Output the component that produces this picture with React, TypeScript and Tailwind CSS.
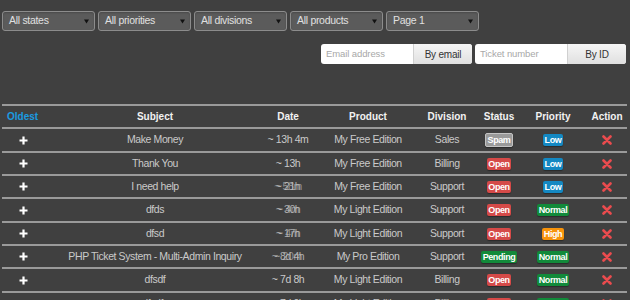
import React from "react";

type Row = {
  subject: string;
  date: string[];
  product: string;
  division: string;
  status: string;
  priority: string;
};

const rows: Row[] = [
  { subject: "Make Money", date: ["~ 13h 4m"], product: "My Free Edition", division: "Sales", status: "Spam", priority: "Low" },
  { subject: "Thank You", date: ["~ 13h"], product: "My Free Edition", division: "Billing", status: "Open", priority: "Low" },
  { subject: "I need help", date: ["~ 21h", "~ 58m"], product: "My Free Edition", division: "Support", status: "Open", priority: "Low" },
  { subject: "dfds", date: ["~ 30h", "~ 4m"], product: "My Light Edition", division: "Support", status: "Open", priority: "Normal" },
  { subject: "dfsd", date: ["~ 17h", "~ 4m"], product: "My Light Edition", division: "Support", status: "Open", priority: "High" },
  { subject: "PHP Ticket System - Multi-Admin Inquiry", date: ["~ 8d 4h", "~ 20m"], product: "My Pro Edition", division: "Support", status: "Pending", priority: "Normal" },
  { subject: "dfsdf", date: ["~ 7d 8h"], product: "My Light Edition", division: "Billing", status: "Open", priority: "Normal" },
  { subject: "dfsdfs", date: ["~ 7d 9h"], product: "My Light Edition", division: "Billing", status: "Open", priority: "Normal" },
];

const rowHeights = ["h-[22px]", "h-[21px]", "h-[21px]", "h-[22px]", "h-[21px]", "h-[21px]", "h-[22px]", "h-[22px]"];

const badgeColor: Record<string, string> = {
  Spam: "bg-[#9a9a9a] border border-[#c4c4c4]",
  Open: "bg-[#d54a48]",
  Pending: "bg-[#128a3a]",
  Low: "bg-[#1488c2]",
  Normal: "bg-[#128a3a]",
  High: "bg-[#f7930b]",
};

const grid = "grid grid-cols-[42px_222px_44px_116px_42px_62px_46px_51px]";

function Badge({ label }: { label: string }) {
  return (
    <span
      className={`${badgeColor[label]} text-white font-bold text-[9px] leading-[12px] px-[1.5px] rounded-[2px] shadow-[0_1px_1px_rgba(0,0,0,0.35)]`}
      style={{ fontFamily: '"Liberation Sans", Arial, sans-serif' }}
    >
      {label}
    </span>
  );
}

function Select({ label }: { label: string }) {
  return (
    <div className="w-[93px] h-[20px] bg-[#5b5b5b] border border-[#8c8c8c] rounded-[3px] flex items-center justify-between pl-[6px] pr-[5px] shadow-[inset_0_1px_2px_rgba(0,0,0,0.2)]">
      <span className="text-[10.5px] tracking-[-0.3px] text-[#e0e0e0]">{label}</span>
      <svg width="5" height="5" viewBox="0 0 5 5">
        <path d="M0 0.5 L5 0.5 L2.5 4.5 Z" fill="#111" />
      </svg>
    </div>
  );
}

function SearchGroup({ placeholder, button }: { placeholder: string; button: string }) {
  return (
    <div className="flex h-[20px] rounded-[3px] overflow-hidden bg-white">
      <div className="w-[92px] flex items-center pl-[5px] text-[9.5px] text-[#a8a8a8] tracking-[-0.1px]">{placeholder}</div>
      <div className="w-[59px] flex items-center justify-center text-[10px] text-[#333] tracking-[-0.2px] bg-gradient-to-b from-[#f6f6f6] to-[#e0e0e0] border-l border-[#d0d0d0]">
        {button}
      </div>
    </div>
  );
}

function Plus() {
  return (
    <svg width="9" height="9" viewBox="0 0 9 9">
      <path d="M4.5 0.5 V8.5 M0.5 4.5 H8.5" stroke="#fff" strokeWidth="2.2" />
    </svg>
  );
}

function Cross() {
  return (
    <svg width="10" height="10" viewBox="0 0 10 10">
      <path d="M1.5 1.5 L8.5 8.5 M8.5 1.5 L1.5 8.5" stroke="#ea4b4e" strokeWidth="2.6" strokeLinecap="round" />
    </svg>
  );
}

const cell = "flex items-center justify-center whitespace-nowrap";

export default function App() {
  return (
    <div
      className="w-[630px] h-[300px] overflow-hidden bg-[#404040] pl-[2px] pt-[11px]"
      style={{ fontFamily: '"Liberation Sans", Arial, sans-serif' }}
    >
      <div className="flex gap-[3px]">
        <Select label="All states" />
        <Select label="All priorities" />
        <Select label="All divisions" />
        <Select label="All products" />
        <Select label="Page 1" />
      </div>
      <div className="flex justify-end gap-[3px] mt-[13px] pr-[4px]">
        <SearchGroup placeholder="Email address" button="By email" />
        <SearchGroup placeholder="Ticket number" button="By ID" />
      </div>
      <div className="mt-[40px] w-[625px]">
        <div className={`${grid} h-[21px] border-t-2 border-[#9a9a9a] box-content text-[10px] font-bold text-[#f2f2f2]`}>
          <div className="flex items-center pl-[5px] text-[#1a9be0]">Oldest</div>
          <div className={cell}>Subject</div>
          <div className={cell}>Date</div>
          <div className={cell}>Product</div>
          <div className={cell}>Division</div>
          <div className={cell}>Status</div>
          <div className={cell}>Priority</div>
          <div className={`${cell} pl-[11px]`}>Action</div>
        </div>
        {rows.map((r, i) => (
          <div
            key={i}
            className={`${grid} ${rowHeights[i]} box-content border-t-2 border-[#9a9a9a] text-[10.5px] tracking-[-0.4px] text-[#cacaca]`}
          >
            <div className={cell}>
              <Plus />
            </div>
            <div className={cell}>{r.subject}</div>
            <div className={`${cell} relative`}>
              {r.date.length === 1 ? (
                <span>{r.date[0]}</span>
              ) : (
                <>
                  <span className="opacity-80">{r.date[0]}</span>
                  <span className="absolute inset-0 flex items-center justify-center opacity-60">{r.date[1]}</span>
                </>
              )}
            </div>
            <div className={cell}>{r.product}</div>
            <div className={cell}>{r.division}</div>
            <div className={cell}>
              <Badge label={r.status} />
            </div>
            <div className={cell}>
              <Badge label={r.priority} />
            </div>
            <div className={`${cell} pl-[11px]`}>
              <Cross />
            </div>
          </div>
        ))}
      </div>
    </div>
  );
}
